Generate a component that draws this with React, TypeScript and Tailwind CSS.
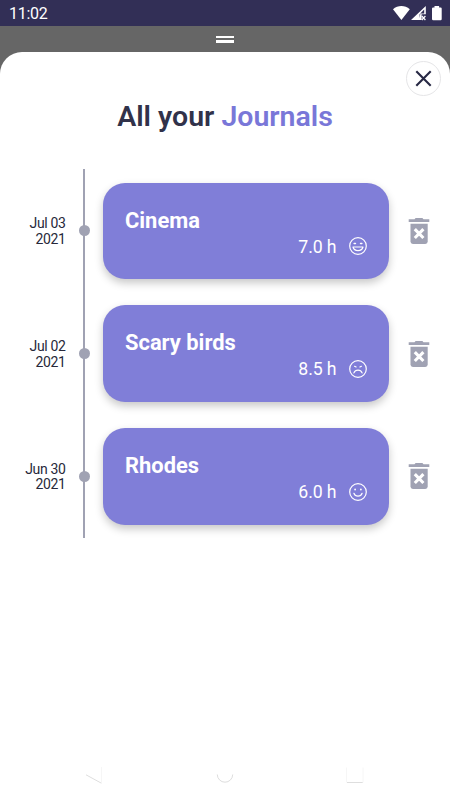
import React from 'react';

type Mood = 'laugh' | 'sad' | 'smile';

interface Journal {
  day: string;
  year: string;
  title: string;
  hours: string;
  mood: Mood;
}

const journals: Journal[] = [
  { day: 'Jul 03', year: '2021', title: 'Cinema', hours: '7.0 h', mood: 'laugh' },
  { day: 'Jul 02', year: '2021', title: 'Scary birds', hours: '8.5 h', mood: 'sad' },
  { day: 'Jun 30', year: '2021', title: 'Rhodes', hours: '6.0 h', mood: 'smile' },
];

function MoodIcon({ mood }: { mood: Mood }) {
  return (
    <svg className="block h-[18px] w-[18px]" viewBox="0 0 18 18" fill="none" stroke="#fff" strokeWidth="1.2" strokeLinecap="round" strokeLinejoin="round">
      <circle cx="9" cy="9" r="8.3" />
      {mood === 'laugh' && (
        <>
          <path d="M5.1 6.5h1.4M11.5 6.5h1.4" strokeWidth="1.4" />
          <path d="M4 10h10c-.6 2.3-2.6 3.6-5 3.6S4.6 12.3 4 10z" />
        </>
      )}
      {mood === 'sad' && (
        <>
          <path d="M5.6 6.3l1.5.7M12.4 6.3l-1.5.7" />
          <path d="M4.9 12.9c.8-2 2.3-2.8 4.1-2.8s3.3.8 4.1 2.8" />
        </>
      )}
      {mood === 'smile' && (
        <>
          <path d="M6.1 6.5v.1M11.9 6.5v.1" strokeWidth="1.8" />
          <path d="M4.9 10.3c.7 1.9 2.3 2.9 4.1 2.9s3.4-1 4.1-2.9" />
        </>
      )}
    </svg>
  );
}

function TrashIcon() {
  return (
    <svg className="block h-[28px] w-[22px]" viewBox="0 0 22 28">
      <path fill="#a0a2b3" d="M.7 2.2h5.8L7.6.9h6.8l1.1 1.3h5.8v2.7H.7z" />
      <path fill="#a0a2b3" d="M2.5 6.7h17.2v17.8q0 2.4-2.4 2.4H4.9q-2.4 0-2.4-2.4z" />
      <path d="M6.8 12.2l8.6 8.8M15.4 12.2L6.8 21" stroke="#fff" strokeWidth="3.1" />
    </svg>
  );
}

function StatusBar() {
  return (
    <div className="flex h-[26px] items-center justify-between bg-[#322f56] pr-2 pl-[9px] text-white">
      <span className="pt-[2px] text-[16px] leading-[20px] tracking-[-0.3px]">11:02</span>
      <svg className="block h-[16px] w-[50px]" viewBox="392 5 50 16">
        <path fill="#fff" d="M393 9.2c4.8-4.3 12-4.3 16.8 0L401.4 20z" />
        <path fill="#fff" fillRule="evenodd" d="M425.8 6v8.3h-4.2V20H411zM424.2 9.6l-4.6 4.7v4l.8-4.9h3.8z" />
        <path d="M421.8 16l3.6 4M425.4 16l-3.6 4" stroke="#fff" strokeWidth="1.2" />
        <path fill="#fff" d="M434.5 6h4.6v1.5h1.5q1.1 0 1.1 1.1V19q0 1.2-1.1 1.2h-7.4q-1.2 0-1.2-1.2V8.6q0-1.1 1.2-1.1h1.3z" />
      </svg>
    </div>
  );
}

function JournalRow({ journal }: { journal: Journal }) {
  return (
    <li className="flex h-[122.8px]">
      <div className="flex w-[65.5px] flex-col justify-center pt-[2px] text-right text-[14px] leading-[15.5px] tracking-[-0.35px] text-[#27283a]">
        <span>{journal.day}</span>
        <span>{journal.year}</span>
      </div>
      <div className="grid w-[37.5px] place-items-center">
        <div className="col-start-1 row-start-1 h-full w-[2px] bg-[#a0a2b3]" />
        <div className="col-start-1 row-start-1 size-[11px] rounded-full bg-[#a0a2b3]" />
      </div>
      <article className="my-[13.2px] w-[285.7px] rounded-[22px] bg-[#807ed8] pt-[24px] pr-[21.7px] pl-[22px] text-white shadow-[0_4px_9px_rgba(0,0,0,0.22)]">
        <h2 className="text-[21.9px] leading-[28px] font-bold">{journal.title}</h2>
        <div className="flex items-center justify-end gap-[12.5px]">
          <span className="text-[17.7px] leading-[24px] tracking-[-0.1px]">{journal.hours}</span>
          <div className="-mt-px">
            <MoodIcon mood={journal.mood} />
          </div>
        </div>
      </article>
      <button className="ml-[19.3px] self-center" aria-label="Delete">
        <TrashIcon />
      </button>
    </li>
  );
}

export default function App() {
  return (
    <div className="flex h-[800px] w-[450px] flex-col overflow-hidden bg-[#666] font-['Roboto',sans-serif]">
      <StatusBar />
      <div className="flex h-[26.4px] flex-col items-center gap-[2px] pt-[10px]">
        <div className="h-[2px] w-[18px] bg-white" />
        <div className="h-[3px] w-[18px] bg-white" />
      </div>
      <main className="flex flex-1 flex-col rounded-t-[22px] bg-white">
        <div className="flex h-[44px] justify-end pt-[9px] pr-[9px]">
          <button aria-label="Close" className="grid size-[35px] place-items-center rounded-full border border-[#e5e5e7]">
            <svg className="block size-[17px]" viewBox="0 0 17 17" stroke="#272844" strokeWidth="2.1" fill="none">
              <path d="M1.3 1.3l14.4 14.4M15.7 1.3L1.3 15.7" />
            </svg>
          </button>
        </div>
        <h1 className="h-[73.1px] pt-[3px] text-center text-[28.5px] leading-[36px] font-semibold text-[#31324a]">
          All your <span className="text-[#7977d8]">Journals</span>
        </h1>
        <ul className="overflow-hidden">
          {journals.map((j) => (
            <JournalRow key={j.title} journal={j} />
          ))}
        </ul>
        <nav className="mt-auto mb-[16px] flex h-[20px] items-center justify-center">
          <svg className="block h-[20px] w-[290px]" viewBox="80 764 290 20" fill="none" stroke="#dedede">
            <path d="M86 774.8l15.4 8.4" />
            <path d="M101.5 767v16" stroke="#f6f6f6" />
            <path d="M217.3 774.5a7.7 7.7 0 0 0 15.4 0" />
            <path d="M346.5 767.5v15M363 767.5v15" stroke="#f6f6f6" />
            <path d="M347 782.5h15.7" />
          </svg>
        </nav>
      </main>
    </div>
  );
}
